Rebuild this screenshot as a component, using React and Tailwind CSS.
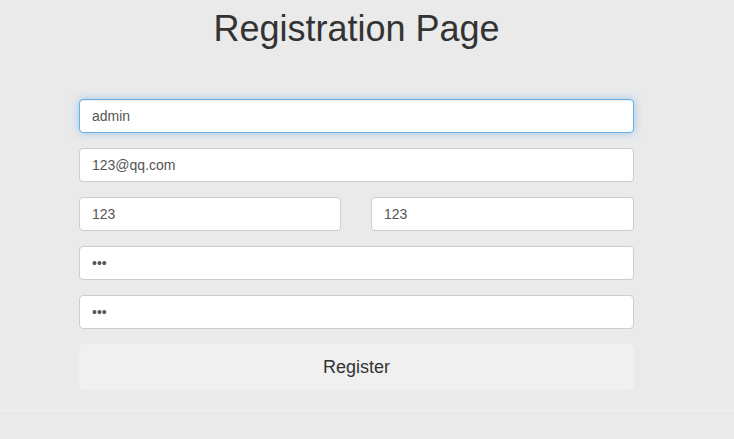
export default function App() {
  const inputBase =
    "block w-full h-[34px] rounded-[4px] border border-[#cccccc] bg-white px-3 text-[14px] text-[#555555] outline-none";
  return (
    <div
      className="min-h-[439px] w-full bg-[#eaeaea] text-[#333333]"
      style={{ fontFamily: '"Liberation Sans", Arial, Helvetica, sans-serif' }}
    >
      <div className="ml-[79px] w-[555px] pt-[9px]">
        <h1 className="text-center text-[36px] leading-[40px] font-normal text-[#333333]">
          Registration Page
        </h1>
        <form className="mt-[50px] flex flex-col gap-[15px]" onSubmit={(e) => e.preventDefault()}>
          <input
            className="block w-full h-[34px] rounded-[4px] border border-[#66afe9] bg-white px-3 text-[14px] text-[#555555] outline-none shadow-[inset_0_1px_1px_rgba(0,0,0,0.075),0_0_8px_rgba(102,175,233,0.6)]"
            defaultValue="admin"
          />
          <input className={inputBase} defaultValue="123@qq.com" />
          <div className="flex gap-[30px]">
            <div className="w-[262px] shrink-0">
              <input className={inputBase} defaultValue="123" />
            </div>
            <div className="flex-1">
              <input className={inputBase} defaultValue="123" />
            </div>
          </div>
          <input className={inputBase} type="password" defaultValue="123" />
          <input className={inputBase} type="password" defaultValue="123" />
          <button
            type="submit"
            className="block w-full h-[46px] rounded-[6px] bg-[#f0f0f0] text-[18px] text-[#333333]"
          >
            Register
          </button>
        </form>
      </div>
      <div className="mt-[20px] border-t border-[#f1f1f1]" />
    </div>
  );
}
